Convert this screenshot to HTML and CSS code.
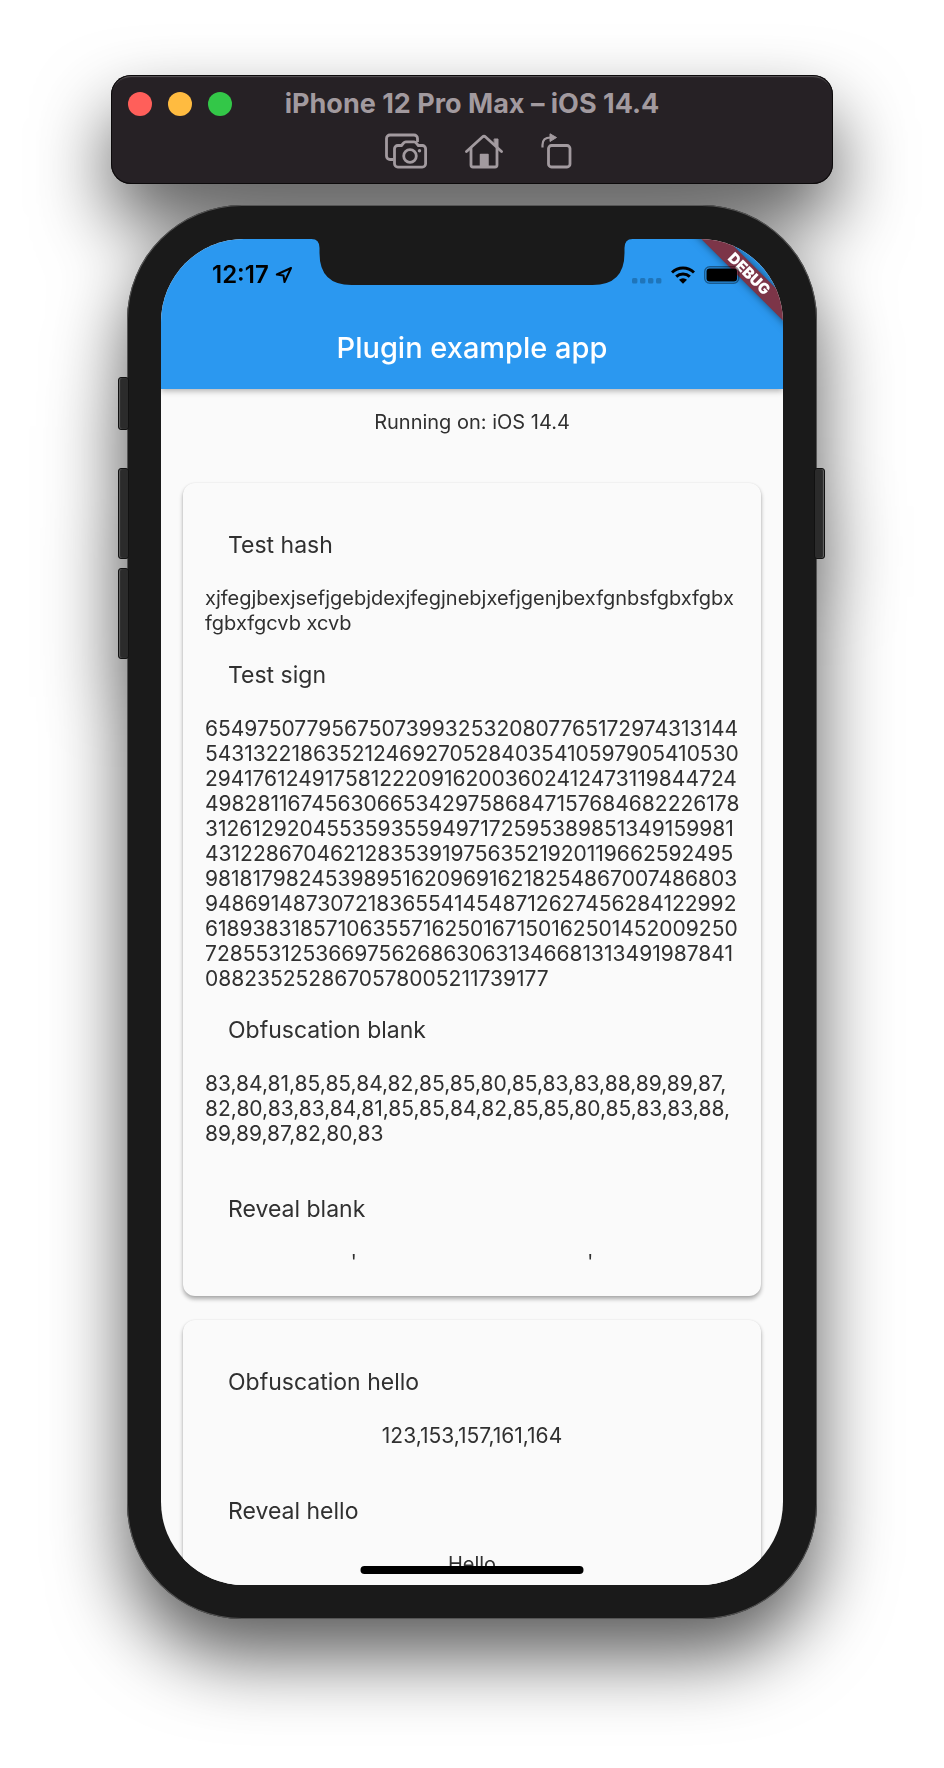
FILE: index.html
```html
<!DOCTYPE html>
<html lang="en">
<head>
<meta charset="utf-8">
<meta name="viewport" content="width=device-width, initial-scale=1">
<title>iPhone 12 Pro Max – iOS 14.4</title>
<link rel="stylesheet" href="styles.css">
</head>
<body>
<main class="simulator">
  <header class="window-bar">
    <div class="title-row">
      <div class="traffic">
        <button class="light light-close" aria-label="Close"></button>
        <button class="light light-minimize" aria-label="Minimize"></button>
        <button class="light light-zoom" aria-label="Zoom"></button>
      </div>
      <h1 class="window-title">iPhone 12 Pro Max – iOS 14.4</h1>
    </div>
    <div class="tool-row">
      <button class="tool" aria-label="Screenshot">
        <svg width="42" height="36" viewBox="0 0 42 36" fill="none" stroke="currentColor" stroke-width="2.8" stroke-linejoin="round">
          <path d="M8.500 26.500H5a3.500 3.500 0 0 1-3.500-3.500V5.500A3.500 3.500 0 0 1 5 2h24a3.500 3.500 0 0 1 3.500 3.500V9"/>
          <path d="M12.800 12.500h3.700l2.200-2.700q.8-1 2-1h8.400q1.200 0 2 1l2.200 2.700h4a3.300 3.300 0 0 1 3.300 3.300v15a3.300 3.300 0 0 1-3.300 3.300H12.800a3.300 3.300 0 0 1-3.300-3.300v-15a3.300 3.300 0 0 1 3.300-3.300z"/>
          <circle cx="25" cy="23" r="6.300"/>
          <circle cx="34.500" cy="17.800" r="1.700" fill="currentColor" stroke="none"/>
        </svg>
      </button>
      <button class="tool" aria-label="Home">
        <svg width="38" height="36" viewBox="0 0 38 36" fill="none" stroke="currentColor" stroke-width="2.800" stroke-linecap="round" stroke-linejoin="round">
          <path d="M1.500 18.500 17.400 4q1.600-1.400 3.200 0L36.500 18.500"/>
          <path d="M6 15.500V32q0 2 2 2h22q2 0 2-2V15.500"/>
          <path d="M29.500 6h3.500v8L29.500 10.500z" fill="currentColor" stroke-width="1"/>
          <path d="M15.500 21.500h7.500V34h-7.500z" fill="currentColor" stroke-width="1.500"/>
        </svg>
      </button>
      <button class="tool" aria-label="Rotate">
        <svg width="31" height="36" viewBox="0 0 31 36" fill="none" stroke="currentColor" stroke-width="2.800">
          <rect x="7.500" y="12.500" width="21.500" height="21.500" rx="3"/>
          <path d="M1.500 14.500V12q0-7.500 8-7.500" stroke-width="2.200"/>
          <path d="M9 .8 15.500 4.500 9 8.500z" fill="currentColor" stroke-width="1" stroke-linejoin="round"/>
        </svg>
      </button>
    </div>
  </header>

  <section class="phone">
    <span class="side-key key-mute"></span>
    <span class="side-key key-up"></span>
    <span class="side-key key-down"></span>
    <span class="side-key key-power"></span>
    <div class="screen">
      <header class="app-bar">
        <div class="status">
          <div class="status-left">
            <span>12:17</span>
            <svg width="18" height="18" viewBox="0 0 18 18" fill="none" stroke="currentColor" stroke-width="2" stroke-linejoin="round"><path d="M16 2 1.800 8.500l6.700 1L9.500 16z"/></svg>
          </div>
          <div class="status-right">
            <svg width="30" height="18" viewBox="0 0 30 18" fill="#1f75ba"><rect x="0" y="12" width="5.400" height="5.400" rx="1.500"/><rect x="8" y="12" width="5.400" height="5.400" rx="1.500"/><rect x="16" y="12" width="5.400" height="5.400" rx="1.500"/><rect x="24" y="12" width="5.400" height="5.400" rx="1.500"/></svg>
            <svg width="24" height="18" viewBox="0 0 24 18" fill="none" stroke="currentColor" stroke-width="3"><path d="M1 6.500a16 16 0 0 1 22 0"/><path d="M5.200 10.700a10 10 0 0 1 13.600 0"/><path d="M12 17.800 8 13.800a5.800 5.800 0 0 1 8 0z" fill="currentColor" stroke="none"/></svg>
            <svg width="39" height="18" viewBox="0 0 39 18"><rect x=".7" y=".7" width="34" height="16.600" rx="5" fill="none" stroke="#000" stroke-opacity=".4" stroke-width="1.400"/><rect x="2.500" y="2.500" width="30.500" height="13" rx="3" fill="currentColor"/></svg>
          </div>
        </div>
        <h2 class="app-title">Plugin example app</h2>
      </header>
      <div class="content">
        <p class="platform">Running on: iOS 14.4</p>
        <article class="card">
          <h3 class="label">Test hash</h3>
          <p class="value">xjfegjbexjsefjgebjdexjfegjnebjxefjgenjbexfgnbsfgbxfgbx
fgbxfgcvb xcvb</p>
          <h3 class="label">Test sign</h3>
          <p class="value value-number">6549750779567507399325320807765172974313144
5431322186352124692705284035410597905410530
29417612491758122209162003602412473119844724
4982811674563066534297586847157684682226178
3126129204553593559497172595389851349159981
4312286704621283539197563521920119662592495
9818179824539895162096916218254867007486803
9486914873072183655414548712627456284122992
61893831857106355716250167150162501452009250
7285531253669756268630631346681313491987841
0882352528670578005211739177</p>
          <h3 class="label">Obfuscation blank</h3>
          <p class="value value-number">83,84,81,85,85,84,82,85,85,80,85,83,83,88,89,89,87,
82,80,83,83,84,81,85,85,84,82,85,85,80,85,83,83,88,
89,89,87,82,80,83</p>
          <h3 class="label label-reveal">Reveal blank</h3>
          <p class="value value-center">'                                         '</p>
        </article>
        <article class="card">
          <h3 class="label">Obfuscation hello</h3>
          <p class="value value-number value-center">123,153,157,161,164</p>
          <h3 class="label label-reveal">Reveal hello</h3>
          <p class="value value-center">Hello</p>
        </article>
      </div>
      <div class="ribbon">DEBUG</div>
      <svg class="notch" width="321" height="47" viewBox="0 0 321 47" fill="#1a1a1a"><path d="M0 0H321Q313 0 313 9V14Q313 46 281 46H40Q8 46 8 14V9Q8 0 0 0z"/></svg>
      <span class="home-bar"></span>
    </div>
  </section>
</main>
</body>
</html>
```
FILE: styles.css
```css
* {
  box-sizing: border-box;
}

body {
  margin: 0;
  background: #fff;
  font-family: Inter, "Liberation Sans", sans-serif;
}

h1, h2, h3, p {
  margin: 0;
  font-weight: 400;
}

button {
  border: 0;
  padding: 0;
  background: none;
  color: inherit;
}

svg {
  display: block;
}

.simulator {
  max-width: 722px;
  margin: 0 auto;
  padding: 75px 0 148px;
  display: flex;
  flex-direction: column;
  align-items: center;
  gap: 21px;
  filter: drop-shadow(0 38px 37px rgba(0, 0, 0, 0.64));
}

/* Window chrome */
.window-bar {
  width: 100%;
  padding: 13px 17px 15px;
  display: flex;
  flex-direction: column;
  gap: 13px;
  border-radius: 20px;
  background: #262125;
  color: #a29a9f;
  box-shadow: inset 0 0 0 1px #0c0a0b, inset 0 2px 1px #5a5659;
}

.title-row {
  display: grid;
  grid-template-columns: 1fr auto 1fr;
  align-items: center;
}

.traffic {
  display: flex;
  gap: 16px;
}

.light {
  width: 24px;
  height: 24px;
  border-radius: 50%;
}

.light-close { background: #ff5f5a; }
.light-minimize { background: #ffbb40; }
.light-zoom { background: #33c748; }

.window-title {
  font-size: 27px;
  line-height: 32px;
  font-weight: 700;
}

.tool-row {
  display: flex;
  justify-content: center;
  gap: 38px;
  padding-left: 12px;
}

/* Device */
.phone {
  position: relative;
  width: 96%;
  max-width: 690px;
  padding: 34px;
  border-radius: 115px;
  background: #1a1a1a;
  box-shadow: inset 0 0 0 1px #555;
}

.side-key {
  position: absolute;
  left: -9px;
  width: 11px;
  height: 91px;
  border-radius: 3px;
  background: #2b2b2b;
  border: 1px solid #111;
  box-shadow: inset 1px 0 1px #666;
}

.key-mute { top: 172px; height: 53px; }
.key-up { top: 263px; }
.key-down { top: 363px; }
.key-power {
  top: 263px;
  left: auto;
  right: -8px;
  box-shadow: inset -1px 0 1px #666;
}

.screen {
  position: relative;
  aspect-ratio: 622 / 1346;
  overflow: hidden;
  border-radius: 83px;
  background: #fafafa;
}

.app-bar {
  position: relative;
  background: #2b98f0;
  color: #fff;
  box-shadow: 0 2px 6px rgba(0, 0, 0, 0.3);
}

.status {
  position: relative;
  z-index: 1;
  display: flex;
  justify-content: space-between;
  align-items: center;
  padding: 21px 40px 0 51px;
  color: #000;
  font-size: 24px;
  line-height: 30px;
  font-weight: 600;
}

.status-left {
  display: flex;
  align-items: center;
  gap: 6px;
}

.status-right {
  display: flex;
  gap: 9px;
}

.app-title {
  padding: 41px 0 24px;
  font-size: 29px;
  line-height: 34px;
  font-weight: 500;
  text-align: center;
}

.content {
  color: #303030;
}

.platform {
  padding: 21px 0 48px;
  font-size: 20px;
  line-height: 25px;
  text-align: center;
}

.card {
  margin: 0 22px 24px;
  padding: 48px 22px 21px;
  border-radius: 12px;
  background: #fafafa;
  box-shadow: 0 3px 4px rgba(0, 0, 0, 0.32), 0 0 2px rgba(0, 0, 0, 0.1);
}

.label {
  padding-left: 23px;
  font-size: 23px;
  line-height: 28px;
}

.value {
  margin: 27px 0 25px;
  font-size: 20px;
  line-height: 25px;
  white-space: pre;
}

.value-number {
  font-size: 21px;
}

.value-center {
  text-align: center;
}

.value:last-child {
  margin-bottom: 0;
}

.label-reveal {
  margin-top: 49px;
}

/* Overlays on the screen */
.ribbon {
  position: absolute;
  top: 26px;
  right: -36px;
  width: 140px;
  background: #7c3548;
  box-shadow: 0 0 9px rgba(0, 0, 0, 0.5);
  color: #fff;
  font-size: 15px;
  line-height: 18px;
  font-weight: 900;
  text-align: center;
  transform: rotate(45deg);
}

.notch {
  position: absolute;
  top: 0;
  left: 50%;
  transform: translateX(-50%);
}

.home-bar {
  position: absolute;
  left: 50%;
  bottom: 11px;
  width: 223px;
  height: 8px;
  border-radius: 4px;
  background: #000;
  transform: translateX(-50%);
}
```
